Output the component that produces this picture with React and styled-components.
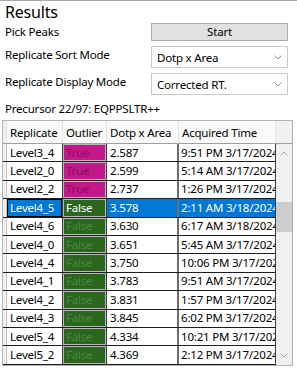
import React from "react";
import styled, { createGlobalStyle } from "styled-components";

const Global = createGlobalStyle`
  html, body { margin: 0; padding: 0; background: #fff; }
  body { font-family: "Noto Sans", "Open Sans", sans-serif; font-size: 11.5px; letter-spacing: -0.2px; color: #000; }
`;

const Page = styled.div`
  width: 297px;
  height: 368px;
  box-sizing: border-box;
  border-top: 1px solid #a8a8a8;
  overflow: hidden;
`;

const Title = styled.div`
  font-size: 16px;
  line-height: 20px;
  height: 21px;
  padding-left: 5px;
  padding-top: 1px;
  box-sizing: border-box;
`;

const Form = styled.div`
  display: grid;
  grid-template-columns: 146px 137px;
  grid-auto-rows: auto;
  padding-left: 5px;
  margin-top: 1px;
  align-items: center;
`;

const Label = styled.div`
  line-height: 16px;
  white-space: nowrap;
`;

const FieldCell = styled.div`
  margin-top: ${(p) => p.$mt || 0}px;
`;

const Button = styled.div`
  height: 18px;
  box-sizing: border-box;
  background: #e1e1e1;
  border: 1px solid #adadad;
  display: flex;
  align-items: center;
  justify-content: center;
  line-height: 16px;
`;

const Combo = styled.div`
  height: 22px;
  box-sizing: border-box;
  background: #fff;
  border: 1px solid #cacaca;
  display: flex;
  align-items: center;
  justify-content: space-between;
  padding: 1px 5px 0 5px;
`;

const Precursor = styled.div`
  padding-left: 5px;
  margin-top: 6px;
  line-height: 16px;
  height: 19px;
`;

const Table = styled.div`
  margin-left: 2px;
  width: 291px;
  box-sizing: border-box;
  border: 1px solid #b4b4b4;
  display: flex;
  flex-direction: column;
`;

const Header = styled.div`
  display: grid;
  grid-template-columns: 4px 56px 44px 72px 97px 16px;
  height: 23px;
  box-sizing: border-box;
  border-bottom: 1px solid #a0a0a0;
  background: #fafafa;
`;

const HeadCell = styled.div`
  padding-left: 3px;
  display: flex;
  align-items: center;
  border-right: 1px solid ${(p) => (p.$last ? "transparent" : "#e2e2e2")};
  background: ${(p) => (p.$gutter ? "#f0f0f0" : "transparent")};
  white-space: nowrap;
  overflow: hidden;
`;

const Body = styled.div`
  display: flex;
`;

const Rows = styled.div`
  display: flex;
  flex-direction: column;
  width: 273px;
`;

const Row = styled.div`
  display: grid;
  grid-template-columns: 4px 56px 44px 72px 97px;
  height: 18.4px;
  box-sizing: border-box;
  border-bottom: 1px solid #1e1e1e;
  background: ${(p) => (p.$selected ? "#0078d7" : "#fff")};
  color: ${(p) => (p.$selected ? "#fff" : "#000")};
`;

const Gutter = styled.div`
  background: #f0f0f0;
  border-right: 1px solid #c8c8c8;
`;

const Cell = styled.div`
  padding-left: ${(p) => (p.$wide ? 2 : 3)}px;
  display: flex;
  align-items: center;
  white-space: nowrap;
  overflow: hidden;
  line-height: 16px;
  border-right: ${(p) => (p.$thick ? "2px solid #6e6e6e" : "1px solid #3a3a3a")};
  box-shadow: ${(p) => (p.$focus ? "inset 0 0 0 1px #000" : "none")};
`;

const Outlier = styled(Cell)`
  background: ${(p) => (p.$bad ? "#c2188a" : "#2b661f")};
  color: ${(p) => (p.$sel ? "#fff" : p.$bad ? "#8a0c62" : "#468a36")};
  box-shadow: inset 0 0 0 1px #b9b9b9;
`;

const Scrollbar = styled.div`
  width: 16px;
  background: #f0f0f0;
  display: flex;
  flex-direction: column;
  align-items: stretch;
`;

const Arrow = styled.div`
  height: 18px;
  display: flex;
  align-items: center;
  justify-content: center;
`;

const Track = styled.div`
  flex: 1;
  display: flex;
  flex-direction: column;
`;

const Thumb = styled.div`
  margin-top: ${(p) => p.$offset}px;
  height: 30px;
  background: #cdcdcd;
`;

const Chevron = ({ up, color = "#8a8a8a" }) => (
  <svg width="8" height="5" viewBox="0 0 8 5">
    <path
      d={up ? "M0.5 4.5 L4 1 L7.5 4.5" : "M0.5 0.5 L4 4 L7.5 0.5"}
      fill="none"
      stroke={color}
      strokeWidth="1"
    />
  </svg>
);

const rows = [
  ["Level3_4", true, "2.587", "9:51 PM 3/17/2024"],
  ["Level2_0", true, "2.599", "5:14 AM 3/17/2024"],
  ["Level2_2", true, "2.737", "1:26 PM 3/17/2024"],
  ["Level4_5", false, "3.578", "2:11 AM 3/18/2024"],
  ["Level4_6", false, "3.630", "6:17 AM 3/18/2024"],
  ["Level4_0", false, "3.651", "5:45 AM 3/17/2024"],
  ["Level4_4", false, "3.750", "10:06 PM 3/17/2024"],
  ["Level4_1", false, "3.783", "9:51 AM 3/17/2024"],
  ["Level4_2", false, "3.831", "1:57 PM 3/17/2024"],
  ["Level4_3", false, "3.845", "6:02 PM 3/17/2024"],
  ["Level5_4", false, "4.334", "10:21 PM 3/17/2024"],
  ["Level5_2", false, "4.369", "2:12 PM 3/17/2024"],
];

export default function App() {
  return (
    <Page>
      <Global />
      <Title>Results</Title>
      <Form>
        <Label>Pick Peaks</Label>
        <FieldCell>
          <Button>Start</Button>
        </FieldCell>
        <Label>Replicate Sort Mode</Label>
        <FieldCell $mt={5}>
          <Combo>
            <span>Dotp x Area</span>
            <Chevron />
          </Combo>
        </FieldCell>
        <Label>Replicate Display Mode</Label>
        <FieldCell $mt={5}>
          <Combo>
            <span>Corrected RT.</span>
            <Chevron />
          </Combo>
        </FieldCell>
      </Form>
      <Precursor>Precursor 22/97: EQPPSLTR++</Precursor>
      <Table>
        <Header>
          <HeadCell $gutter />
          <HeadCell>Replicate</HeadCell>
          <HeadCell>Outlier</HeadCell>
          <HeadCell>Dotp x Area</HeadCell>
          <HeadCell>Acquired Time</HeadCell>
          <HeadCell $gutter $last />
        </Header>
        <Body>
          <Rows>
            {rows.map(([name, bad, dotp, time], i) => {
              const sel = i === 3;
              return (
                <Row key={name} $selected={sel}>
                  <Gutter />
                  <Cell $focus={sel}>{name}</Cell>
                  <Outlier $bad={bad} $sel={sel}>
                    {bad ? "True" : "False"}
                  </Outlier>
                  <Cell $thick>{dotp}</Cell>
                  <Cell $wide>{time}</Cell>
                </Row>
              );
            })}
          </Rows>
          <Scrollbar>
            <Arrow>
              <Chevron up color="#a6a6a6" />
            </Arrow>
            <Track>
              <Thumb $offset={40} />
            </Track>
            <Arrow>
              <Chevron color="#a6a6a6" />
            </Arrow>
          </Scrollbar>
        </Body>
      </Table>
    </Page>
  );
}
